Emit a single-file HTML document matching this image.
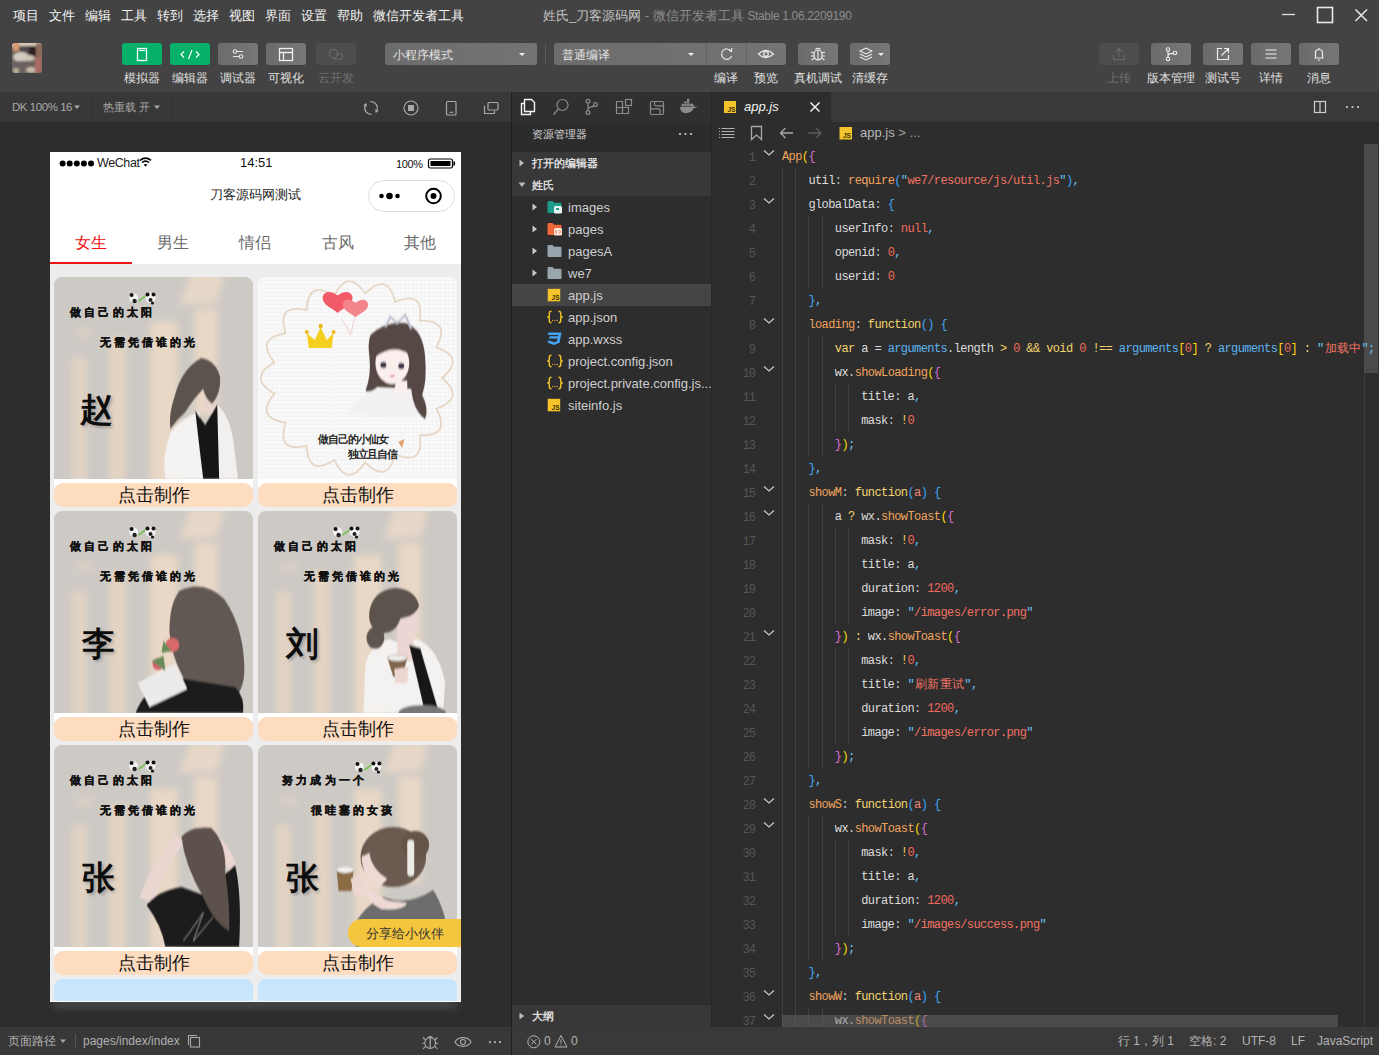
<!DOCTYPE html>
<html><head><meta charset="utf-8">
<style>
*{box-sizing:border-box;margin:0;padding:0}
html,body{width:1379px;height:1055px;overflow:hidden;background:#2d2d2d;font-family:"Liberation Sans",sans-serif;color:#ccc}
.a{position:absolute}
#top{left:0;top:0;width:1379px;height:92px;background:#434343}
.menu{top:8px;font-size:13px;color:#f4f4f4;line-height:16px;white-space:nowrap}
.tbtn{top:43px;width:40px;height:22px;border-radius:3px;background:linear-gradient(90deg,#6b6b6b,#777)}
.tbtn.g{background:#07b16a}
.tbtn.d{background:#4d4d4d}
.tlbl{top:71px;font-size:12px;line-height:14px;color:#e0e0e0;white-space:nowrap;text-align:center;width:60px}
.tlbl.d{color:#717171}
svg{display:block}
#simtb{left:0;top:92px;width:511px;height:30px;background:#383838}
#sim{left:0;top:122px;width:511px;height:905px;background:#2d2d2d;overflow:hidden}
#simbot{left:0;top:1027px;width:511px;height:28px;background:#383838}
#div{left:511px;top:92px;width:1px;height:963px;background:#1f1f1f}
#exp{left:512px;top:92px;width:199px;height:935px;background:#2d2d2d;overflow:hidden}
#ed{left:712px;top:92px;width:667px;height:935px;background:#2d2d2d;overflow:hidden}
#status{left:512px;top:1027px;width:867px;height:28px;background:#393939}
.stx{font-size:12px;color:#a8a8a8;line-height:14px;white-space:nowrap}
#phone{left:50px;top:152px;width:411px;height:850px;background:#fff;overflow:hidden}
.tab{top:234px;width:82px;text-align:center;font-size:16px;line-height:18px;color:#666}
.card{width:199px;height:202px;border-radius:8px 8px 0 0;overflow:hidden}
.mk{width:199px;height:24px;border-radius:9px;background:#fedcbf;color:#111;font-size:18px;line-height:25px;text-align:center}
.tree{font-size:13px;color:#cfcfcf;line-height:22px;white-space:nowrap;height:22px}
.code{font-family:"Liberation Mono",monospace;font-size:12px;letter-spacing:-0.6px;line-height:24px;white-space:pre;color:#d8d8d8}
.ln{font-family:"Liberation Mono",monospace;font-size:12px;letter-spacing:-0.9px;line-height:24px;color:#555;text-align:right;width:40px}
.p{color:#dcdcdc}.o{color:#f0a35c}.s{color:#ef7363}.n{color:#ef6b5b}.k{color:#f2d46c}.b{color:#5cb4f0}.q{color:#6cc4f2}
.br1{color:#ffd700}.br2{color:#da70d6}.br3{color:#3ea8f5}.c{color:#b9c4cc}.pm{color:#f08a7a}
</style></head><body>
<div id="top" class="a">
<div class="a menu" style="left:13px">项目</div>
<div class="a menu" style="left:49px">文件</div>
<div class="a menu" style="left:85px">编辑</div>
<div class="a menu" style="left:121px">工具</div>
<div class="a menu" style="left:157px">转到</div>
<div class="a menu" style="left:193px">选择</div>
<div class="a menu" style="left:229px">视图</div>
<div class="a menu" style="left:265px">界面</div>
<div class="a menu" style="left:301px">设置</div>
<div class="a menu" style="left:337px">帮助</div>
<div class="a menu" style="left:373px">微信开发者工具</div>
<div class="a menu" style="left:543px;color:#c4c4c4">姓氏_刀客源码网<span style="color:#8c8c8c"> - 微信开发者工具 <span style="font-size:12px;letter-spacing:-0.35px">Stable 1.06.2209190</span></span></div>
<svg class="a" style="left:1276px;top:4px" width="100" height="24"><line x1="6" y1="10.5" x2="19" y2="10.5" stroke="#e0e0e0" stroke-width="1.3"/><rect x="41.5" y="3.5" width="15" height="15" fill="none" stroke="#e8e8e8" stroke-width="1.6"/><path d="M79.5 5.5 L91 17 M91 5.5 L79.5 17" stroke="#e8e8e8" stroke-width="1.5"/></svg>
<svg class="a" style="left:12px;top:43px" width="30" height="30"><defs><clipPath id="avc"><rect width="30" height="30" rx="3"/></clipPath><filter id="avb"><feGaussianBlur stdDeviation="1.3"/></filter></defs><g clip-path="url(#avc)"><rect width="30" height="30" fill="#6d625c"/><g filter="url(#avb)"><rect x="-2" y="-2" width="34" height="6" fill="#d8c8b8"/><rect x="1" y="-2" width="6" height="10" fill="#d89a70"/><rect x="7" y="3" width="10" height="9" fill="#4e4a48"/><rect x="17" y="3" width="7" height="12" fill="#2a1e1c"/><rect x="24" y="0" width="8" height="16" fill="#8a6a5c"/><ellipse cx="9" cy="14" rx="8" ry="5" fill="#d4ccc2"/><ellipse cx="17" cy="15" rx="6" ry="3" fill="#cfc4b8"/><rect x="-2" y="18" width="25" height="14" fill="#6a625e"/><ellipse cx="19" cy="27" rx="5" ry="3" fill="#c8bca8"/><rect x="23" y="15" width="7" height="16" fill="#a86a64"/><ellipse cx="4" cy="28" rx="3" ry="3" fill="#b8ae98"/></g></g></svg>
<div class="a tbtn g" style="left:122px"><svg width="40" height="22"><rect x="15.5" y="5.5" width="9" height="12" fill="none" stroke="#fff" stroke-width="1.3"/><line x1="17" y1="7.5" x2="23" y2="7.5" stroke="#fff" stroke-width="1.2"/></svg></div>
<div class="a tlbl " style="left:112px">模拟器</div>
<div class="a tbtn g" style="left:170px"><svg width="40" height="22"><path d="M14 8.5 L11 11.5 L14 14.5 M26 8.5 L29 11.5 L26 14.5 M22 7 L18.5 16" fill="none" stroke="#fff" stroke-width="1.2"/></svg></div>
<div class="a tlbl " style="left:160px">编辑器</div>
<div class="a tbtn " style="left:218px"><svg width="40" height="22"><path d="M15 8.5 H25 M15 13.5 H25" stroke="#e8e8e8" stroke-width="1.1"/><circle cx="17" cy="8.5" r="1.8" fill="#6f6f6f" stroke="#e8e8e8" stroke-width="1.1"/><circle cx="23" cy="13.5" r="1.8" fill="#6f6f6f" stroke="#e8e8e8" stroke-width="1.1"/></svg></div>
<div class="a tlbl " style="left:208px">调试器</div>
<div class="a tbtn " style="left:266px"><svg width="40" height="22"><rect x="13.5" y="5.5" width="13" height="12" fill="none" stroke="#f0f0f0" stroke-width="1.3"/><path d="M13.5 9.5 H26.5 M17.5 9.5 V17.5" stroke="#f0f0f0" stroke-width="1.3"/></svg></div>
<div class="a tlbl " style="left:256px">可视化</div>
<div class="a tbtn d" style="left:316px"><svg width="40" height="22"><circle cx="17.6" cy="10.6" r="4.2" fill="none" stroke="#6a6a6a" stroke-width="1.1"/><path d="M20.6 13.6 A3 3 0 1 1 22 16 H17.5" fill="none" stroke="#6a6a6a" stroke-width="1.1"/></svg></div>
<div class="a tlbl d" style="left:306px">云开发</div>
<div class="a" style="left:385px;top:43px;width:152px;height:22px;border-radius:3px;background:linear-gradient(90deg,#6c6c6c,#747474);font-size:12px;line-height:25px;color:#e4e4e4;padding-left:8px">小程序模式<div class="a" style="left:134px;top:10px;width:0;height:0;border-left:3px solid transparent;border-right:3px solid transparent;border-top:3px solid #eee"></div></div>
<div class="a" style="left:545px;top:43px;width:1px;height:22px;background:#5a5a5a"></div>
<div class="a" style="left:554px;top:43px;width:232px;height:22px;border-radius:3px;background:linear-gradient(90deg,#6c6c6c,#747474);font-size:12px;line-height:25px;color:#e4e4e4;padding-left:8px">普通编译<div class="a" style="left:134px;top:10px;width:0;height:0;border-left:3px solid transparent;border-right:3px solid transparent;border-top:3px solid #eee"></div><div class="a" style="left:152px;top:0;width:1px;height:22px;background:#636363"></div><div class="a" style="left:192px;top:0;width:1px;height:22px;background:#636363"></div><svg class="a" style="left:152px;top:0" width="80" height="22"><path d="M25 8.2 A5.2 5.2 0 1 0 25.6 13" fill="none" stroke="#e8e8e8" stroke-width="1.2"/><path d="M22.5 6.5 L25.5 8.5 L25.8 5" fill="none" stroke="#e8e8e8" stroke-width="1.2"/><path d="M52.5 11 Q60 4 67.5 11 Q60 18 52.5 11 Z" fill="none" stroke="#e8e8e8" stroke-width="1.2"/><circle cx="60" cy="11" r="2.3" fill="none" stroke="#e8e8e8" stroke-width="1.2"/></svg></div>
<div class="a tbtn" style="left:798px"><svg width="40" height="22"><ellipse cx="20" cy="12" rx="4" ry="5" fill="none" stroke="#eee" stroke-width="1.2"/><path d="M17.5 6.5 Q20 4 22.5 6.5 M20 7.5 V17 M13 9 L16 10 M13 13 H16 M13.5 17 L16.5 15 M27 9 L24 10 M27 13 H24 M26.5 17 L23.5 15" fill="none" stroke="#eee" stroke-width="1.1"/></svg></div>
<div class="a tbtn" style="left:850px"><svg width="40" height="22"><path d="M10 8 L16 5 L22 8 L16 11 Z" fill="none" stroke="#eee" stroke-width="1.1"/><path d="M10 11 L16 14 L22 11 M10 14 L16 17 L22 14" fill="none" stroke="#eee" stroke-width="1.1"/><path d="M28 10 L34 10 L31 13 Z" fill="#eee"/></svg></div>
<div class="a tlbl" style="left:696px">编译</div>
<div class="a tlbl" style="left:736px">预览</div>
<div class="a tlbl" style="left:788px">真机调试</div>
<div class="a tlbl" style="left:840px">清缓存</div>
<div class="a tbtn d" style="left:1099px"><svg width="40" height="22"><path d="M20 14 V6 M16.5 9 L20 5.5 L23.5 9 M14.5 12 V16.5 H25.5 V12" fill="none" stroke="#6a6a6a" stroke-width="1.1"/></svg></div>
<div class="a tlbl d" style="left:1089px">上传</div>
<div class="a tbtn " style="left:1151px"><svg width="40" height="22"><circle cx="17" cy="6.5" r="1.7" fill="none" stroke="#eee" stroke-width="1.1"/><circle cx="17" cy="16" r="1.7" fill="none" stroke="#eee" stroke-width="1.1"/><circle cx="24" cy="10" r="1.7" fill="none" stroke="#eee" stroke-width="1.1"/><path d="M17 8.2 V14.3 M17 13 Q17 10.5 22.4 10.4" fill="none" stroke="#eee" stroke-width="1.1"/></svg></div>
<div class="a tlbl " style="left:1141px">版本管理</div>
<div class="a tbtn " style="left:1203px"><svg width="40" height="22"><path d="M19 5.5 H14.5 V16.5 H25.5 V12 M21 5.5 H25.5 V10 M25 6 L18.5 12.5" fill="none" stroke="#eee" stroke-width="1.2"/></svg></div>
<div class="a tlbl " style="left:1193px">测试号</div>
<div class="a tbtn " style="left:1251px"><svg width="40" height="22"><path d="M14.5 7 H25.5 M14.5 11 H25.5 M14.5 15 H25.5" stroke="#eee" stroke-width="1.2"/></svg></div>
<div class="a tlbl " style="left:1241px">详情</div>
<div class="a tbtn " style="left:1299px"><svg width="40" height="22"><path d="M15.5 15 H24.5 M16.5 15 V10 A3.5 3.5 0 0 1 23.5 10 V15 M19 17 H21 M20 5 V6.5" fill="none" stroke="#eee" stroke-width="1.2"/></svg></div>
<div class="a tlbl " style="left:1289px">消息</div>
</div>

<div id="simtb" class="a"></div><div class="a stx" style="left:12px;top:100px;font-size:11.5px;letter-spacing:-0.45px">DK 100% 16</div><svg class="a" style="left:74px;top:105px" width="7" height="5"><path d="M0 0.5 H6 L3 4 Z" fill="#a8a8a8"/></svg><div class="a" style="left:92px;top:92px;width:1px;height:30px;background:#333"></div><div class="a stx" style="left:103px;top:100px;font-size:11px">热重载 开</div><svg class="a" style="left:154px;top:105px" width="7" height="5"><path d="M0 0.5 H6 L3 4 Z" fill="#a8a8a8"/></svg><div class="a" style="left:171px;top:92px;width:1px;height:30px;background:#333"></div><svg class="a" style="left:355px;top:92px" width="156" height="30"><path d="M15.45 9.72 A6.3 6.3 0 0 1 21.71 18.66" fill="none" stroke="#a8a8a8" stroke-width="1.2"/><path d="M20.61 21.02 L23.73 19.05 L20.11 17.36 Z" fill="#a8a8a8"/><path d="M16.55 22.28 A6.3 6.3 0 0 1 10.29 13.34" fill="none" stroke="#a8a8a8" stroke-width="1.2"/><path d="M11.39 10.98 L8.27 12.95 L11.89 14.64 Z" fill="#a8a8a8"/><circle cx="56" cy="16" r="7" fill="none" stroke="#a8a8a8" stroke-width="1.2"/><rect x="53" y="13" width="6" height="6" fill="#a8a8a8"/><rect x="91.5" y="9.5" width="9.5" height="13.5" rx="1.3" fill="none" stroke="#a8a8a8" stroke-width="1.2"/><path d="M94.5 20.3 H98.3" stroke="#a8a8a8" stroke-width="1.1"/><rect x="133" y="10.5" width="10" height="7.5" rx="1" fill="none" stroke="#a8a8a8" stroke-width="1.2"/><path d="M130 14 H129.5 V21.5 H139.5 V19" fill="none" stroke="#a8a8a8" stroke-width="1.2"/></svg>
<div id="sim" class="a"></div>
<div id="simbot" class="a"></div><div class="a stx" style="left:8px;top:1034px;color:#b0b0b0">页面路径</div><svg class="a" style="left:60px;top:1039px" width="7" height="5"><path d="M0 0.5 H6 L3 4 Z" fill="#a8a8a8"/></svg><div class="a" style="left:75px;top:1034px;width:1px;height:14px;background:#555"></div><div class="a stx" style="left:83px;top:1034px;color:#b0b0b0">pages/index/index</div><svg class="a" style="left:186px;top:1033px" width="16" height="16"><rect x="4.5" y="4.5" width="9" height="9.5" fill="none" stroke="#a8a8a8" stroke-width="1.1"/><path d="M2.5 12 V2.5 H11" fill="none" stroke="#a8a8a8" stroke-width="1.1"/></svg><svg class="a" style="left:418px;top:1031px" width="90" height="22"><circle cx="12.2" cy="12" r="5.4" fill="none" stroke="#a8a8a8" stroke-width="1.1"/><path d="M9.8 6.8 Q12.2 4.2 14.6 6.8" fill="none" stroke="#a8a8a8" stroke-width="1.1"/><path d="M12.2 6.8 V17.2" stroke="#a8a8a8" stroke-width="1.3"/><path d="M5 6.5 L7.6 9 M4.2 12.3 H6.6 M5 17.8 L7.6 15.4 M19.4 6.5 L16.8 9 M20.2 12.3 H17.8 M19.4 17.8 L16.8 15.4" fill="none" stroke="#a8a8a8" stroke-width="1.1"/><path d="M37 11 C40 5.2 50 5.2 53 11 C50 16.8 40 16.8 37 11 Z" fill="none" stroke="#a8a8a8" stroke-width="1.1"/><circle cx="45" cy="11" r="2.5" fill="none" stroke="#a8a8a8" stroke-width="1.1"/><rect x="88.5" y="0" width="0" height="0"/><rect x="71" y="10.1" width="2" height="2" fill="#a8a8a8"/><rect x="76" y="10.1" width="2" height="2" fill="#a8a8a8"/><rect x="81" y="10.1" width="2" height="2" fill="#a8a8a8"/></svg>
<div id="div" class="a"></div><div class="a" style="left:52px;top:994px;width:407px;height:8px;box-shadow:0 6px 8px -2px rgba(125,125,125,0.75)"></div>
<div id="phone" class="a">
<svg class="a" style="left:0;top:0" width="411" height="22"><circle cx="12.6" cy="11.6" r="3" fill="#000"/><circle cx="19.7" cy="11.6" r="3" fill="#000"/><circle cx="26.8" cy="11.6" r="3" fill="#000"/><circle cx="33.9" cy="11.6" r="3" fill="#000"/><circle cx="41.0" cy="11.6" r="3" fill="#000"/><path d="M90 8.3 Q95.5 3.8 101 8.3" fill="none" stroke="#000" stroke-width="1.6"/><path d="M92 10.5 Q95.5 7.6 99 10.5" fill="none" stroke="#000" stroke-width="1.6"/><path d="M93.7 12.6 Q95.5 11.2 97.3 12.6 L95.5 14.8 Z" fill="#000"/><rect x="378.5" y="7" width="24" height="9" rx="1.8" fill="none" stroke="#000" stroke-width="1.2"/><rect x="380.5" y="9" width="20" height="5" fill="#000"/><path d="M404 9.5 Q405.5 11.5 404 13.5 Z" fill="#000" stroke="#000" stroke-width="1"/></svg>
<div class="a" style="left:47px;top:4px;font-size:12.5px;line-height:15px;color:#222;letter-spacing:-0.4px">WeChat</div>
<div class="a" style="left:190px;top:3px;width:31px;text-align:center;font-size:13px;line-height:15px;color:#111">14:51</div>
<div class="a" style="left:346px;top:6px;font-size:11px;line-height:13px;color:#111;letter-spacing:-0.4px">100%</div>
<div class="a" style="left:0;top:35px;width:411px;text-align:center;font-size:13px;line-height:16px;color:#222;padding-right:0">刀客源码网测试</div>
<svg class="a" style="left:317px;top:27px" width="90" height="34"><rect x="1.5" y="1.5" width="86" height="31" rx="15.5" fill="#fff" stroke="#dcdcdc" stroke-width="1"/><circle cx="14.5" cy="17" r="2.3" fill="#000"/><circle cx="22.5" cy="17" r="3.3" fill="#000"/><circle cx="30.5" cy="17" r="2.3" fill="#000"/><circle cx="66.5" cy="17" r="7.3" fill="none" stroke="#000" stroke-width="2"/><circle cx="66.5" cy="17" r="3" fill="#000"/></svg>
<div class="a tab" style="left:0px;top:82px;color:#f01010">女生</div>
<div class="a tab" style="left:82px;top:82px;color:#6a6a6a">男生</div>
<div class="a tab" style="left:164px;top:82px;color:#6a6a6a">情侣</div>
<div class="a tab" style="left:247px;top:82px;color:#6a6a6a">古风</div>
<div class="a tab" style="left:329px;top:82px;color:#6a6a6a">其他</div>
<div class="a" style="left:0;top:110px;width:82px;height:2px;background:#f01515"></div>
<div class="a" style="left:0;top:112px;width:411px;height:738px;background:#ededed"></div>
<svg width="0" height="0" style="position:absolute"><defs><filter id="blur3" x="-20%" y="-20%" width="140%" height="140%"><feGaussianBlur stdDeviation="3.5"/></filter><filter id="blur5" x="-20%" y="-20%" width="140%" height="140%"><feGaussianBlur stdDeviation="5"/></filter><filter id="blur2" x="-20%" y="-20%" width="140%" height="140%"><feGaussianBlur stdDeviation="1.5"/></filter><filter id="blur1" x="-20%" y="-20%" width="140%" height="140%"><feGaussianBlur stdDeviation="0.8"/></filter><pattern id="grid" width="4" height="4" patternUnits="userSpaceOnUse"><rect width="4" height="4" fill="#f9f9f9"/><path d="M4 0 V4 H0" fill="none" stroke="#e4e4e4" stroke-width="0.5"/></pattern></defs></svg>
<div class="a" style="left:4px;top:323px;width:199px;height:12px;background:#fff"></div>
<div class="a card" style="left:4px;top:125px"><svg width="199" height="202" viewBox="0 0 200 202" preserveAspectRatio="none"><rect width="200" height="202" fill="#cdc9c4"/><g filter="url(#blur3)"><path d="M138 -5 L172 -5 L164 26 L126 28 Z" fill="#e6d7c8"/><rect x="18" y="80" width="15" height="130" fill="#e2d3c4"/><rect x="22" y="50" width="18" height="12" fill="#d8cec4"/><rect x="56" y="60" width="16" height="150" fill="#e4d4c3"/><rect x="97" y="44" width="27" height="165" fill="#e9d8c6"/><rect x="141" y="32" width="23" height="106" fill="#e9d8c6"/></g><g transform="translate(75,15)"><circle cx="5" cy="6" r="4.5" fill="#f2f2f2"/><circle cx="3" cy="3" r="2" fill="#111"/><circle cx="6" cy="9" r="2.2" fill="#222"/><path d="M10 9 L17 4" stroke="#7cc35a" stroke-width="2"/><circle cx="22" cy="6" r="5" fill="#f2f2f2"/><circle cx="19" cy="2.5" r="2" fill="#111"/><circle cx="25" cy="2.5" r="2" fill="#111"/><circle cx="22" cy="8" r="2" fill="#222"/><circle cx="24" cy="11" r="1.6" fill="#111"/></g><text x="16" y="39.5" font-family='"Liberation Serif",serif' font-size="11" font-weight="bold" letter-spacing="3.3" fill="#111" stroke="#111" stroke-width="0.35">做自己的太阳</text><text x="46" y="69.5" font-family='"Liberation Serif",serif' font-size="11" font-weight="bold" letter-spacing="3" fill="#111" stroke="#111" stroke-width="0.35">无需凭借谁的光</text><text x="28" y="146" font-family='"Liberation Serif",serif' font-size="33" font-weight="bold" fill="#000" opacity="0.22" filter="url(#blur2)">赵</text><text x="26" y="144" font-family='"Liberation Serif",serif' font-size="33" font-weight="bold" fill="#0c0c0c">赵</text><g filter="url(#blur1)"><path d="M112 202 Q108 180 117 156 Q128 140 146 135 L152 202 Z" fill="#f4f3f1"/><path d="M164 128 Q176 138 180 162 L185 202 L165 202 Z" fill="#f2f0ee"/><path d="M150 118 L161 120 L160 134 L150 136 Z" fill="#e9d3cf"/><path d="M142 134 L152 148 L164 128 L166 202 L150 202 Q146 170 142 134 Z" fill="#141414"/><path d="M148 81 Q163 84 167 100 Q168 116 159 127 Q152 122 150 112 Q140 122 132 135 Q124 142 117 152 Q115 138 121 120 Q128 92 148 81 Z" fill="#5c534d"/></g></svg></div>
<div class="a mk" style="left:4px;top:331px">点击制作</div>
<div class="a" style="left:208px;top:323px;width:199px;height:12px;background:#fff"></div>
<div class="a card" style="left:208px;top:125px"><svg width="199" height="202" viewBox="0 0 200 202" preserveAspectRatio="none"><rect width="200" height="202" fill="url(#grid)"/><path d="M185.0 101.0 Q209.1 121.4 179.3 131.7 Q194.4 159.4 162.8 158.3 Q166.9 189.6 137.9 177.1 Q130.4 207.8 107.8 185.6 Q89.8 211.5 76.7 182.8 Q50.5 200.4 48.8 168.8 Q18.0 175.8 27.7 145.7 Q-3.5 141.1 16.4 116.6 Q-11.0 101.0 16.4 85.4 Q-3.5 60.9 27.7 56.3 Q18.0 26.2 48.8 33.2 Q50.5 1.6 76.7 19.2 Q89.8 -9.5 107.8 16.4 Q130.4 -5.8 137.9 24.9 Q166.9 12.4 162.8 43.7 Q194.4 42.6 179.3 70.3 Q209.1 80.6 185.0 101.0 Z" fill="none" stroke="#e6d6c6" stroke-width="1.8"/><path transform="translate(80,26) scale(1.25)" d="M0 8 C-4 4 -12 2 -12 -4 C-12 -9 -6 -11 0 -6 C6 -11 12 -9 12 -4 C12 2 4 4 0 8 Z" fill="#f25a68"/><path transform="translate(98,32) scale(1.05)" d="M0 8 C-4 4 -12 2 -12 -4 C-12 -9 -6 -11 0 -6 C6 -11 12 -9 12 -4 C12 2 4 4 0 8 Z" fill="#f4848c"/><path d="M84 42 Q90 50 93 58 M97 42 L93 58" stroke="#f0b0b0" stroke-width="0.6" fill="none"/><path d="M51 71 L49 56 L57 63 L63 50 L69 63 L76 56 L74 71 Z" fill="#f5d020"/><circle cx="49" cy="55" r="2" fill="#eeb820"/><circle cx="63" cy="49" r="2.2" fill="#eeb820"/><circle cx="76" cy="55" r="2" fill="#eeb820"/><g filter="url(#blur1)"><path d="M88 138 Q100 118 120 112 L150 112 Q162 118 162 140 Z" fill="#f3f0f2"/><path d="M113 58 Q128 44 148 46 Q166 52 168 80 Q170 104 165 118 Q172 132 168 142 Q156 134 154 112 L120 110 Q114 116 108 114 Q114 98 112 80 Q110 66 113 58 Z" fill="#574a44"/><ellipse cx="135" cy="86" rx="17" ry="21" fill="#fbefee"/><path d="M139 104 L150 104 L150 116 L136 116 Z" fill="#fbefee"/><path d="M116 72 Q132 54 154 70 L153 78 Q136 66 118 80 Z" fill="#574a44"/><ellipse cx="126" cy="88" rx="3" ry="3.3" fill="#3c3848"/><ellipse cx="144" cy="89" rx="3" ry="3.3" fill="#3c3848"/><ellipse cx="135" cy="99" rx="2.3" ry="1.1" fill="#e06a70"/><path d="M128 50 L133 40 L140 46 L148 38 L154 52" fill="none" stroke="#c0c0d0" stroke-width="2.2"/></g><text x="60" y="166" font-family='"Liberation Sans",sans-serif' font-size="10.5" font-weight="bold" fill="#222">做自己的小仙女</text><text x="90" y="181" font-family='"Liberation Sans",sans-serif' font-size="10.5" font-weight="bold" fill="#222">独立且自信</text><path d="M141 165 L147 162 L145 171 Z" fill="#e0a070"/></svg></div>
<div class="a mk" style="left:208px;top:331px">点击制作</div>
<div class="a" style="left:4px;top:557px;width:199px;height:12px;background:#fff"></div>
<div class="a card" style="left:4px;top:359px"><svg width="199" height="202" viewBox="0 0 200 202" preserveAspectRatio="none"><rect width="200" height="202" fill="#cdc9c4"/><g filter="url(#blur3)"><path d="M138 -5 L172 -5 L164 26 L126 28 Z" fill="#e6d7c8"/><rect x="18" y="80" width="15" height="130" fill="#e2d3c4"/><rect x="22" y="50" width="18" height="12" fill="#d8cec4"/><rect x="56" y="60" width="16" height="150" fill="#e4d4c3"/><rect x="97" y="44" width="27" height="165" fill="#e9d8c6"/><rect x="141" y="32" width="23" height="106" fill="#e9d8c6"/></g><g transform="translate(75,15)"><circle cx="5" cy="6" r="4.5" fill="#f2f2f2"/><circle cx="3" cy="3" r="2" fill="#111"/><circle cx="6" cy="9" r="2.2" fill="#222"/><path d="M10 9 L17 4" stroke="#7cc35a" stroke-width="2"/><circle cx="22" cy="6" r="5" fill="#f2f2f2"/><circle cx="19" cy="2.5" r="2" fill="#111"/><circle cx="25" cy="2.5" r="2" fill="#111"/><circle cx="22" cy="8" r="2" fill="#222"/><circle cx="24" cy="11" r="1.6" fill="#111"/></g><text x="16" y="39.5" font-family='"Liberation Serif",serif' font-size="11" font-weight="bold" letter-spacing="3.3" fill="#111" stroke="#111" stroke-width="0.35">做自己的太阳</text><text x="46" y="69.5" font-family='"Liberation Serif",serif' font-size="11" font-weight="bold" letter-spacing="3" fill="#111" stroke="#111" stroke-width="0.35">无需凭借谁的光</text><text x="30" y="146" font-family='"Liberation Serif",serif' font-size="33" font-weight="bold" fill="#000" opacity="0.22" filter="url(#blur2)">李</text><text x="28" y="144" font-family='"Liberation Serif",serif' font-size="33" font-weight="bold" fill="#0c0c0c">李</text><g filter="url(#blur1)"><path d="M126 80 Q150 68 171 88 Q189 114 191 150 Q193 176 182 186 L140 182 Q118 152 116 120 Q116 93 126 80 Z" fill="#625852"/><path d="M82 202 Q92 176 120 166 L182 176 Q192 186 190 202 Z" fill="#1b1b1b"/><path d="M84 172 L122 152 L134 178 L96 196 Z" fill="#ecebea"/><circle cx="119" cy="134" r="7" fill="#d96b6b"/><circle cx="105" cy="153" r="6" fill="#d7606a"/><path d="M98 150 L110 145 L112 160 Z" fill="#6a8a5a"/><path d="M110 130 L118 140 L108 142 Z" fill="#6a8a5a"/></g></svg></div>
<div class="a mk" style="left:4px;top:565px">点击制作</div>
<div class="a" style="left:208px;top:557px;width:199px;height:12px;background:#fff"></div>
<div class="a card" style="left:208px;top:359px"><svg width="199" height="202" viewBox="0 0 200 202" preserveAspectRatio="none"><rect width="200" height="202" fill="#cdc9c4"/><g filter="url(#blur3)"><path d="M138 -5 L172 -5 L164 26 L126 28 Z" fill="#e6d7c8"/><rect x="18" y="80" width="15" height="130" fill="#e2d3c4"/><rect x="22" y="50" width="18" height="12" fill="#d8cec4"/><rect x="56" y="60" width="16" height="150" fill="#e4d4c3"/><rect x="97" y="44" width="27" height="165" fill="#e9d8c6"/><rect x="141" y="32" width="23" height="106" fill="#e9d8c6"/></g><g transform="translate(75,15)"><circle cx="5" cy="6" r="4.5" fill="#f2f2f2"/><circle cx="3" cy="3" r="2" fill="#111"/><circle cx="6" cy="9" r="2.2" fill="#222"/><path d="M10 9 L17 4" stroke="#7cc35a" stroke-width="2"/><circle cx="22" cy="6" r="5" fill="#f2f2f2"/><circle cx="19" cy="2.5" r="2" fill="#111"/><circle cx="25" cy="2.5" r="2" fill="#111"/><circle cx="22" cy="8" r="2" fill="#222"/><circle cx="24" cy="11" r="1.6" fill="#111"/></g><text x="16" y="39.5" font-family='"Liberation Serif",serif' font-size="11" font-weight="bold" letter-spacing="3.3" fill="#111" stroke="#111" stroke-width="0.35">做自己的太阳</text><text x="46" y="69.5" font-family='"Liberation Serif",serif' font-size="11" font-weight="bold" letter-spacing="3" fill="#111" stroke="#111" stroke-width="0.35">无需凭借谁的光</text><text x="30" y="146" font-family='"Liberation Serif",serif' font-size="33" font-weight="bold" fill="#000" opacity="0.22" filter="url(#blur2)">刘</text><text x="28" y="144" font-family='"Liberation Serif",serif' font-size="33" font-weight="bold" fill="#0c0c0c">刘</text><g filter="url(#blur1)"><path d="M106 202 L108 152 Q114 134 132 128 L142 132 L160 128 Q182 138 188 172 L186 202 Z" fill="#f4f2f0"/><path d="M143 96 Q158 94 162 108 Q160 122 156 128 L158 150 L140 150 L140 115 Z" fill="#ebd6d3"/><path d="M112 100 Q116 79 138 77 Q158 78 162 95 Q158 104 150 106 L143 108 Q140 118 132 121 Q122 124 118 120 Q110 112 112 100 Z" fill="#5c534d"/><ellipse cx="118" cy="127" rx="9" ry="11" fill="#5e554f"/><path d="M152 134 L163 137 L182 202 L168 202 Z" fill="#161616"/><path d="M130 147 L150 147 L145 166 L136 166 Z" fill="#7f6548"/><ellipse cx="140" cy="147" rx="10" ry="3.2" fill="#f0efea" stroke="#9a9080" stroke-width="0.6"/><path d="M137 158 L151 156 L150 172 L138 172 Z" fill="#ecd6d0"/><ellipse cx="165" cy="202" rx="24" ry="8" fill="#777"/></g></svg></div>
<div class="a mk" style="left:208px;top:565px">点击制作</div>
<div class="a" style="left:4px;top:791px;width:199px;height:12px;background:#fff"></div>
<div class="a card" style="left:4px;top:593px"><svg width="199" height="202" viewBox="0 0 200 202" preserveAspectRatio="none"><rect width="200" height="202" fill="#cdc9c4"/><g filter="url(#blur3)"><path d="M138 -5 L172 -5 L164 26 L126 28 Z" fill="#e6d7c8"/><rect x="18" y="80" width="15" height="130" fill="#e2d3c4"/><rect x="22" y="50" width="18" height="12" fill="#d8cec4"/><rect x="56" y="60" width="16" height="150" fill="#e4d4c3"/><rect x="97" y="44" width="27" height="165" fill="#e9d8c6"/><rect x="141" y="32" width="23" height="106" fill="#e9d8c6"/></g><g transform="translate(75,15)"><circle cx="5" cy="6" r="4.5" fill="#f2f2f2"/><circle cx="3" cy="3" r="2" fill="#111"/><circle cx="6" cy="9" r="2.2" fill="#222"/><path d="M10 9 L17 4" stroke="#7cc35a" stroke-width="2"/><circle cx="22" cy="6" r="5" fill="#f2f2f2"/><circle cx="19" cy="2.5" r="2" fill="#111"/><circle cx="25" cy="2.5" r="2" fill="#111"/><circle cx="22" cy="8" r="2" fill="#222"/><circle cx="24" cy="11" r="1.6" fill="#111"/></g><text x="16" y="39.5" font-family='"Liberation Serif",serif' font-size="11" font-weight="bold" letter-spacing="3.3" fill="#111" stroke="#111" stroke-width="0.35">做自己的太阳</text><text x="46" y="69.5" font-family='"Liberation Serif",serif' font-size="11" font-weight="bold" letter-spacing="3" fill="#111" stroke="#111" stroke-width="0.35">无需凭借谁的光</text><text x="30" y="146" font-family='"Liberation Serif",serif' font-size="33" font-weight="bold" fill="#000" opacity="0.22" filter="url(#blur2)">张</text><text x="28" y="144" font-family='"Liberation Serif",serif' font-size="33" font-weight="bold" fill="#0c0c0c">张</text><g filter="url(#blur1)"><path d="M86 152 Q96 124 121 90 L131 97 Q109 127 99 158 Z" fill="#ebd5d1"/><path d="M143 80 Q166 82 183 118 L176 126 Q164 100 143 91 Z" fill="#ebd5d1"/><path d="M93 160 Q104 146 128 142 L150 150 Q162 138 182 120 Q189 150 186 202 L112 202 Q108 180 93 160 Z" fill="#1d1d1d"/><path d="M128 92 Q138 80 158 83 Q174 98 172 128 Q177 158 176 186 Q160 176 150 152 Q132 122 128 92 Z" fill="#5b514b"/><path d="M130 196 L150 168 L140 196 L160 172" fill="none" stroke="#9a9a9a" stroke-width="0.8"/></g></svg></div>
<div class="a mk" style="left:4px;top:799px">点击制作</div>
<div class="a" style="left:208px;top:791px;width:199px;height:12px;background:#fff"></div>
<div class="a card" style="left:208px;top:593px"><svg width="199" height="202" viewBox="0 0 200 202" preserveAspectRatio="none"><rect width="200" height="202" fill="#cdc9c4"/><g filter="url(#blur3)"><path d="M138 -5 L172 -5 L164 26 L126 28 Z" fill="#e6d7c8"/><rect x="18" y="80" width="15" height="130" fill="#e2d3c4"/><rect x="22" y="50" width="18" height="12" fill="#d8cec4"/><rect x="56" y="60" width="16" height="150" fill="#e4d4c3"/><rect x="97" y="44" width="27" height="165" fill="#e9d8c6"/><rect x="141" y="32" width="23" height="106" fill="#e9d8c6"/></g><g transform="translate(97,16)"><circle cx="5" cy="6" r="4.5" fill="#f2f2f2"/><circle cx="3" cy="3" r="2" fill="#111"/><circle cx="6" cy="9" r="2.2" fill="#222"/><path d="M10 9 L17 4" stroke="#7cc35a" stroke-width="2"/><circle cx="22" cy="6" r="5" fill="#f2f2f2"/><circle cx="19" cy="2.5" r="2" fill="#111"/><circle cx="25" cy="2.5" r="2" fill="#111"/><circle cx="22" cy="8" r="2" fill="#222"/><circle cx="24" cy="11" r="1.6" fill="#111"/></g><text x="24" y="39.5" font-family='"Liberation Serif",serif' font-size="11" font-weight="bold" letter-spacing="3.3" fill="#111" stroke="#111" stroke-width="0.35">努力成为一个</text><text x="53" y="69.5" font-family='"Liberation Serif",serif' font-size="11" font-weight="bold" letter-spacing="3" fill="#111" stroke="#111" stroke-width="0.35">很哇塞的女孩</text><text x="30" y="146" font-family='"Liberation Serif",serif' font-size="33" font-weight="bold" fill="#000" opacity="0.22" filter="url(#blur2)">张</text><text x="28" y="144" font-family='"Liberation Serif",serif' font-size="33" font-weight="bold" fill="#0c0c0c">张</text><g filter="url(#blur1)"><path d="M98 178 Q108 160 126 152 Q150 162 176 145 Q190 166 192 202 L98 202 Z" fill="#6c6c6c"/><path d="M103 122 Q110 148 132 156 L150 158 Q146 166 124 164 Q102 154 103 122 Z" fill="#eed9d4"/><ellipse cx="136" cy="112" rx="33" ry="30" fill="#6a5a4f"/><circle cx="158" cy="100" r="14" fill="#655549"/><path d="M104 112 Q106 134 120 144 L130 134 Q114 124 112 108 Z" fill="#eed9d4"/><rect x="150" y="95" width="7" height="36" rx="3" fill="#ecebe6"/><path d="M79 125 L96 125 L94 146 L81 146 Z" fill="#8b6c45"/><ellipse cx="87.5" cy="125" rx="8.5" ry="3" fill="#f2f2f0"/><path d="M93 134 L104 128 L110 150 L98 152 Z" fill="#edd6d0"/></g></svg></div>
<div class="a mk" style="left:208px;top:799px">点击制作</div>
<div class="a" style="left:4px;top:827px;width:199px;height:30px;border-radius:8px 8px 0 0;background:linear-gradient(180deg,#c6e4fc,#cbe8fd)"></div>
<div class="a" style="left:208px;top:827px;width:199px;height:30px;border-radius:8px 8px 0 0;background:linear-gradient(180deg,#c6e4fc,#cbe8fd)"></div>
<div class="a" style="left:0;top:849px;width:411px;height:1px;background:#fff"></div>
<div class="a" style="left:298px;top:767px;width:120px;height:28px;border-radius:14px 0 0 14px;background:#f3c63e;color:#333;font-size:13px;line-height:29px;padding-left:18px;white-space:nowrap">分享给小伙伴</div>
</div>
<div id="exp" class="a"></div>
<div class="a" style="left:512px;top:92px;width:199px;height:30px;background:#303030"></div>
<svg class="a" style="left:512px;top:92px" width="199" height="30"><path d="M12.5 11.5 H9.5 V22.5 H18.5 V19.5" fill="none" stroke="#f4f4f4" stroke-width="1.4"/><path d="M12.5 7.5 H19.5 L22.5 10.5 V19.5 H12.5 Z" fill="none" stroke="#f4f4f4" stroke-width="1.4"/><circle cx="50.5" cy="13" r="5.5" fill="none" stroke="#8c8c8c" stroke-width="1.2"/><path d="M46.6 16.9 L41.5 22.5" stroke="#8c8c8c" stroke-width="1.3"/><circle cx="76" cy="9.3" r="1.9" fill="none" stroke="#8c8c8c" stroke-width="1.2"/><circle cx="76" cy="20.5" r="1.9" fill="none" stroke="#8c8c8c" stroke-width="1.2"/><circle cx="83.5" cy="12.5" r="1.9" fill="none" stroke="#8c8c8c" stroke-width="1.2"/><path d="M76 11.2 V18.6 M76 17 Q77 15 82.5 14.2" fill="none" stroke="#8c8c8c" stroke-width="1.2"/><path d="M104.5 15.5 H110.5 V21.5 H104.5 Z M110.5 15.5 H116.5 V21.5 H110.5 Z M104.5 15.5 V9.5 H110.5 V15.5" fill="none" stroke="#8c8c8c" stroke-width="1.2"/><rect x="113.5" y="7.5" width="6" height="6" fill="none" stroke="#8c8c8c" stroke-width="1.2"/><rect x="138.5" y="9.5" width="13" height="13" rx="1.2" fill="none" stroke="#8c8c8c" stroke-width="1.2"/><path d="M142.6 9.5 V12.6 Q142.6 13.8 144 13.8 H151.5 M138.5 16.8 H147 Q148.2 16.8 148.2 18 V22.5" fill="none" stroke="#8c8c8c" stroke-width="1.2"/><path d="M168 15 H181 Q183.5 14.2 185.5 14.5 Q183.5 16.2 181.5 16.6 Q179 21.2 174 21.3 Q168.3 21 168 15 Z" fill="#8c8c8c"/><path d="M179.5 15 L180.6 11 L182.6 14.6 Z" fill="#8c8c8c"/><rect x="169.6" y="11.8" width="2.3" height="2.6" fill="#8c8c8c"/><rect x="172.3" y="11.8" width="2.3" height="2.6" fill="#8c8c8c"/><rect x="175" y="11.8" width="2.3" height="2.6" fill="#8c8c8c"/><rect x="177.7" y="11.8" width="2.3" height="2.6" fill="#8c8c8c"/><rect x="172.3" y="9.3" width="2.3" height="2.2" fill="#8c8c8c"/><rect x="175" y="9.3" width="2.3" height="2.2" fill="#8c8c8c"/><rect x="175" y="6.8" width="2.3" height="2.2" fill="#8c8c8c"/></svg>
<div class="a" style="left:512px;top:122px;width:199px;height:30px;background:#2c2c2c"></div>
<div class="a" style="left:532px;top:127px;font-size:11px;line-height:14px;color:#d4d4d4">资源管理器</div>
<svg class="a" style="left:676px;top:128px" width="20" height="12"><circle cx="4" cy="6" r="1.1" fill="#d0d0d0"/><circle cx="9.5" cy="6" r="1.1" fill="#d0d0d0"/><circle cx="15" cy="6" r="1.1" fill="#d0d0d0"/></svg>
<div class="a" style="left:512px;top:152px;width:199px;height:22px;background:#383838"></div>
<svg class="a" style="left:519px;top:159px" width="6" height="8"><path d="M0.5 0.5 V7.5 L5 4 Z" fill="#bdbdbd"/></svg>
<div class="a" style="left:532px;top:156px;font-size:11px;line-height:14px;color:#dcdcdc;font-weight:bold">打开的编辑器</div>
<div class="a" style="left:512px;top:174px;width:199px;height:22px;background:#383838"></div>
<svg class="a" style="left:518px;top:182px" width="8" height="6"><path d="M0.5 0.5 H7.5 L4 5 Z" fill="#bdbdbd"/></svg>
<div class="a" style="left:532px;top:178px;font-size:11px;line-height:14px;color:#dcdcdc;font-weight:bold">姓氏</div>
<svg class="a" style="left:532px;top:203px" width="6" height="8"><path d="M0.5 0.5 V7.5 L5 4 Z" fill="#c8c8c8"/></svg>
<div class="a" style="left:547px;top:200px"><svg width="16" height="14"><path d="M0.5 2 Q0.5 1 1.5 1 H5.5 L7 2.8 H13.5 Q14.5 2.8 14.5 3.8 V12 Q14.5 13 13.5 13 H1.5 Q0.5 13 0.5 12 Z" fill="#1f9d8c"/><rect x="7" y="6" width="8" height="7.5" rx="1.5" fill="#e9f5f2"/><path d="M9 8 H12 V10 H9 Z" fill="#1f9d8c"/></svg></div>
<div class="a tree" style="left:568px;top:197px">images</div>
<svg class="a" style="left:532px;top:225px" width="6" height="8"><path d="M0.5 0.5 V7.5 L5 4 Z" fill="#c8c8c8"/></svg>
<div class="a" style="left:547px;top:222px"><svg width="16" height="14"><path d="M0.5 2 Q0.5 1 1.5 1 H5.5 L7 2.8 H13.5 Q14.5 2.8 14.5 3.8 V12 Q14.5 13 13.5 13 H1.5 Q0.5 13 0.5 12 Z" fill="#f0673a"/><rect x="7" y="6" width="8" height="7.5" rx="1.5" fill="#fde4da"/><path d="M9.5 8 L8.5 9.7 L9.5 11.4 M12.5 8 L13.5 9.7 L12.5 11.4" fill="none" stroke="#f0673a" stroke-width="0.9"/></svg></div>
<div class="a tree" style="left:568px;top:219px">pages</div>
<svg class="a" style="left:532px;top:247px" width="6" height="8"><path d="M0.5 0.5 V7.5 L5 4 Z" fill="#c8c8c8"/></svg>
<div class="a" style="left:547px;top:244px"><svg width="16" height="14"><path d="M0.5 2 Q0.5 1 1.5 1 H5.5 L7 2.8 H13.5 Q14.5 2.8 14.5 3.8 V12 Q14.5 13 13.5 13 H1.5 Q0.5 13 0.5 12 Z" fill="#9aa6ae"/></svg></div>
<div class="a tree" style="left:568px;top:241px">pagesA</div>
<svg class="a" style="left:532px;top:269px" width="6" height="8"><path d="M0.5 0.5 V7.5 L5 4 Z" fill="#c8c8c8"/></svg>
<div class="a" style="left:547px;top:266px"><svg width="16" height="14"><path d="M0.5 2 Q0.5 1 1.5 1 H5.5 L7 2.8 H13.5 Q14.5 2.8 14.5 3.8 V12 Q14.5 13 13.5 13 H1.5 Q0.5 13 0.5 12 Z" fill="#9aa6ae"/></svg></div>
<div class="a tree" style="left:568px;top:263px">we7</div>
<div class="a" style="left:512px;top:284px;width:199px;height:22px;background:#454545"></div>
<div class="a" style="left:547px;top:288px"><svg width="14" height="14"><rect x="0.7" y="0.8" width="12.5" height="12.5" fill="#f6c42a"/><text x="4.6" y="11.8" font-family='"Liberation Sans",sans-serif' font-size="6.5" font-weight="bold" fill="#3a3000">JS</text></svg></div>
<div class="a tree" style="left:568px;top:285px">app.js</div>
<div class="a" style="left:547px;top:310px"><svg width="17" height="14"><path d="M4.5 1.2 Q2.3 1.2 2.3 3.2 V5.6 Q2.3 7 0.3 7 Q2.3 7 2.3 8.4 V10.8 Q2.3 12.8 4.5 12.8 M11.5 1.2 Q13.7 1.2 13.7 3.2 V5.6 Q13.7 7 15.7 7 Q13.7 7 13.7 8.4 V10.8 Q13.7 12.8 11.5 12.8" fill="none" stroke="#f3c42b" stroke-width="1.4"/><circle cx="5.6" cy="10.6" r="0.75" fill="#c9a23a"/><circle cx="8" cy="10.6" r="0.75" fill="#c9a23a"/><circle cx="10.4" cy="10.6" r="0.75" fill="#c9a23a"/></svg></div>
<div class="a tree" style="left:568px;top:307px">app.json</div>
<div class="a" style="left:547px;top:332px"><svg width="16" height="14"><path d="M1.5 0.5 H14.5 L12.5 10.8 L7 13 L0.8 10.8 L1.4 8.3 L7 10.3 L10 9.3 L10.6 6.6 H2 L2.6 4.2 H11.1 L11.4 2.9 H1 Z" fill="#42a5f5"/></svg></div>
<div class="a tree" style="left:568px;top:329px">app.wxss</div>
<div class="a" style="left:547px;top:354px"><svg width="17" height="14"><path d="M4.5 1.2 Q2.3 1.2 2.3 3.2 V5.6 Q2.3 7 0.3 7 Q2.3 7 2.3 8.4 V10.8 Q2.3 12.8 4.5 12.8 M11.5 1.2 Q13.7 1.2 13.7 3.2 V5.6 Q13.7 7 15.7 7 Q13.7 7 13.7 8.4 V10.8 Q13.7 12.8 11.5 12.8" fill="none" stroke="#f3c42b" stroke-width="1.4"/><circle cx="5.6" cy="10.6" r="0.75" fill="#c9a23a"/><circle cx="8" cy="10.6" r="0.75" fill="#c9a23a"/><circle cx="10.4" cy="10.6" r="0.75" fill="#c9a23a"/></svg></div>
<div class="a tree" style="left:568px;top:351px">project.config.json</div>
<div class="a" style="left:547px;top:376px"><svg width="17" height="14"><path d="M4.5 1.2 Q2.3 1.2 2.3 3.2 V5.6 Q2.3 7 0.3 7 Q2.3 7 2.3 8.4 V10.8 Q2.3 12.8 4.5 12.8 M11.5 1.2 Q13.7 1.2 13.7 3.2 V5.6 Q13.7 7 15.7 7 Q13.7 7 13.7 8.4 V10.8 Q13.7 12.8 11.5 12.8" fill="none" stroke="#f3c42b" stroke-width="1.4"/><circle cx="5.6" cy="10.6" r="0.75" fill="#c9a23a"/><circle cx="8" cy="10.6" r="0.75" fill="#c9a23a"/><circle cx="10.4" cy="10.6" r="0.75" fill="#c9a23a"/></svg></div>
<div class="a tree" style="left:568px;top:373px">project.private.config.js...</div>
<div class="a" style="left:547px;top:398px"><svg width="14" height="14"><rect x="0.7" y="0.8" width="12.5" height="12.5" fill="#f6c42a"/><text x="4.6" y="11.8" font-family='"Liberation Sans",sans-serif' font-size="6.5" font-weight="bold" fill="#3a3000">JS</text></svg></div>
<div class="a tree" style="left:568px;top:395px">siteinfo.js</div>
<div class="a" style="left:512px;top:1005px;width:199px;height:22px;background:#383838"></div>
<svg class="a" style="left:519px;top:1012px" width="6" height="8"><path d="M0.5 0.5 V7.5 L5 4 Z" fill="#bdbdbd"/></svg>
<div class="a" style="left:532px;top:1009px;font-size:11px;line-height:14px;color:#dcdcdc;font-weight:bold">大纲</div>
<div class="a" style="left:711px;top:92px;width:1px;height:935px;background:#272727"></div>
<div id="ed" class="a"></div>
<div class="a" style="left:712px;top:92px;width:667px;height:30px;background:#393939"></div>
<div class="a" style="left:712px;top:92px;width:119px;height:30px;background:#2d2d2d"></div>
<svg class="a" style="left:723px;top:100px" width="14" height="14"><rect x="1" y="1" width="12" height="12" fill="#f3c42b"/><text x="4.5" y="11.6" font-family='"Liberation Sans",sans-serif' font-size="6.5" font-weight="bold" fill="#3a3000">JS</text></svg>
<div class="a" style="left:744px;top:99px;font-size:13px;line-height:16px;color:#f2f2f2;font-style:italic">app.js</div>
<svg class="a" style="left:806px;top:98px" width="18" height="18"><path d="M4.5 4.5 L13.5 13.5 M13.5 4.5 L4.5 13.5" stroke="#f0f0f0" stroke-width="1.5"/></svg>
<svg class="a" style="left:1306px;top:96px" width="60" height="22"><rect x="8.5" y="5.5" width="11" height="11" fill="none" stroke="#d0d0d0" stroke-width="1.2"/><path d="M14 5.5 V16.5" stroke="#d0d0d0" stroke-width="1.2"/><circle cx="41" cy="11" r="1.1" fill="#d0d0d0"/><circle cx="46.5" cy="11" r="1.1" fill="#d0d0d0"/><circle cx="52" cy="11" r="1.1" fill="#d0d0d0"/></svg>
<svg class="a" style="left:712px;top:122px" width="160" height="22"><path d="M9.5 6.5 H22.5 M9.5 9.5 H22.5 M9.5 12.5 H22.5 M9.5 15.5 H22.5" stroke="#b0b0b0" stroke-width="1"/><path d="M7 6.5 H8 M7 9.5 H8 M7 12.5 H8 M7 15.5 H8" stroke="#b0b0b0" stroke-width="1"/><path d="M39.5 4.5 H49.5 V17.5 L44.5 13 L39.5 17.5 Z" fill="none" stroke="#a8a8a8" stroke-width="1.3"/><path d="M68.5 11 H81 M73.5 6 L68.5 11 L73.5 16" fill="none" stroke="#a8a8a8" stroke-width="1.3"/><path d="M96.5 11 H109 M104 6 L109 11 L104 16" fill="none" stroke="#5c5c5c" stroke-width="1.3"/><rect x="127.5" y="5" width="12.5" height="12.5" fill="#f3c42b"/><text x="131" y="16" font-family='"Liberation Sans",sans-serif' font-size="6.5" font-weight="bold" fill="#3a3000">JS</text></svg>
<div class="a" style="left:860px;top:125px;font-size:13px;line-height:16px;color:#b8b8b8;white-space:nowrap">app.js <span style="color:#a0a0a0">&gt; ...</span></div>
<div class="a" style="left:782px;top:168px;width:1px;height:24px;background:#404040"></div>
<div class="a" style="left:795px;top:168px;width:1px;height:24px;background:#404040"></div>
<div class="a" style="left:782px;top:192px;width:1px;height:24px;background:#404040"></div>
<div class="a" style="left:795px;top:192px;width:1px;height:24px;background:#404040"></div>
<div class="a" style="left:782px;top:216px;width:1px;height:24px;background:#404040"></div>
<div class="a" style="left:795px;top:216px;width:1px;height:24px;background:#404040"></div>
<div class="a" style="left:808px;top:216px;width:1px;height:24px;background:#404040"></div>
<div class="a" style="left:822px;top:216px;width:1px;height:24px;background:#404040"></div>
<div class="a" style="left:782px;top:240px;width:1px;height:24px;background:#404040"></div>
<div class="a" style="left:795px;top:240px;width:1px;height:24px;background:#404040"></div>
<div class="a" style="left:808px;top:240px;width:1px;height:24px;background:#404040"></div>
<div class="a" style="left:822px;top:240px;width:1px;height:24px;background:#404040"></div>
<div class="a" style="left:782px;top:264px;width:1px;height:24px;background:#404040"></div>
<div class="a" style="left:795px;top:264px;width:1px;height:24px;background:#404040"></div>
<div class="a" style="left:808px;top:264px;width:1px;height:24px;background:#404040"></div>
<div class="a" style="left:822px;top:264px;width:1px;height:24px;background:#404040"></div>
<div class="a" style="left:782px;top:288px;width:1px;height:24px;background:#404040"></div>
<div class="a" style="left:795px;top:288px;width:1px;height:24px;background:#404040"></div>
<div class="a" style="left:782px;top:312px;width:1px;height:24px;background:#404040"></div>
<div class="a" style="left:795px;top:312px;width:1px;height:24px;background:#404040"></div>
<div class="a" style="left:782px;top:336px;width:1px;height:24px;background:#404040"></div>
<div class="a" style="left:795px;top:336px;width:1px;height:24px;background:#404040"></div>
<div class="a" style="left:808px;top:336px;width:1px;height:24px;background:#404040"></div>
<div class="a" style="left:822px;top:336px;width:1px;height:24px;background:#404040"></div>
<div class="a" style="left:782px;top:360px;width:1px;height:24px;background:#404040"></div>
<div class="a" style="left:795px;top:360px;width:1px;height:24px;background:#404040"></div>
<div class="a" style="left:808px;top:360px;width:1px;height:24px;background:#404040"></div>
<div class="a" style="left:822px;top:360px;width:1px;height:24px;background:#404040"></div>
<div class="a" style="left:782px;top:384px;width:1px;height:24px;background:#404040"></div>
<div class="a" style="left:795px;top:384px;width:1px;height:24px;background:#404040"></div>
<div class="a" style="left:808px;top:384px;width:1px;height:24px;background:#404040"></div>
<div class="a" style="left:822px;top:384px;width:1px;height:24px;background:#404040"></div>
<div class="a" style="left:835px;top:384px;width:1px;height:24px;background:#404040"></div>
<div class="a" style="left:848px;top:384px;width:1px;height:24px;background:#404040"></div>
<div class="a" style="left:782px;top:408px;width:1px;height:24px;background:#404040"></div>
<div class="a" style="left:795px;top:408px;width:1px;height:24px;background:#404040"></div>
<div class="a" style="left:808px;top:408px;width:1px;height:24px;background:#404040"></div>
<div class="a" style="left:822px;top:408px;width:1px;height:24px;background:#404040"></div>
<div class="a" style="left:835px;top:408px;width:1px;height:24px;background:#404040"></div>
<div class="a" style="left:848px;top:408px;width:1px;height:24px;background:#404040"></div>
<div class="a" style="left:782px;top:432px;width:1px;height:24px;background:#404040"></div>
<div class="a" style="left:795px;top:432px;width:1px;height:24px;background:#404040"></div>
<div class="a" style="left:808px;top:432px;width:1px;height:24px;background:#404040"></div>
<div class="a" style="left:822px;top:432px;width:1px;height:24px;background:#404040"></div>
<div class="a" style="left:782px;top:456px;width:1px;height:24px;background:#404040"></div>
<div class="a" style="left:795px;top:456px;width:1px;height:24px;background:#404040"></div>
<div class="a" style="left:782px;top:480px;width:1px;height:24px;background:#404040"></div>
<div class="a" style="left:795px;top:480px;width:1px;height:24px;background:#404040"></div>
<div class="a" style="left:782px;top:504px;width:1px;height:24px;background:#404040"></div>
<div class="a" style="left:795px;top:504px;width:1px;height:24px;background:#404040"></div>
<div class="a" style="left:808px;top:504px;width:1px;height:24px;background:#404040"></div>
<div class="a" style="left:822px;top:504px;width:1px;height:24px;background:#404040"></div>
<div class="a" style="left:782px;top:528px;width:1px;height:24px;background:#404040"></div>
<div class="a" style="left:795px;top:528px;width:1px;height:24px;background:#404040"></div>
<div class="a" style="left:808px;top:528px;width:1px;height:24px;background:#404040"></div>
<div class="a" style="left:822px;top:528px;width:1px;height:24px;background:#404040"></div>
<div class="a" style="left:835px;top:528px;width:1px;height:24px;background:#404040"></div>
<div class="a" style="left:848px;top:528px;width:1px;height:24px;background:#404040"></div>
<div class="a" style="left:782px;top:552px;width:1px;height:24px;background:#404040"></div>
<div class="a" style="left:795px;top:552px;width:1px;height:24px;background:#404040"></div>
<div class="a" style="left:808px;top:552px;width:1px;height:24px;background:#404040"></div>
<div class="a" style="left:822px;top:552px;width:1px;height:24px;background:#404040"></div>
<div class="a" style="left:835px;top:552px;width:1px;height:24px;background:#404040"></div>
<div class="a" style="left:848px;top:552px;width:1px;height:24px;background:#404040"></div>
<div class="a" style="left:782px;top:576px;width:1px;height:24px;background:#404040"></div>
<div class="a" style="left:795px;top:576px;width:1px;height:24px;background:#404040"></div>
<div class="a" style="left:808px;top:576px;width:1px;height:24px;background:#404040"></div>
<div class="a" style="left:822px;top:576px;width:1px;height:24px;background:#404040"></div>
<div class="a" style="left:835px;top:576px;width:1px;height:24px;background:#404040"></div>
<div class="a" style="left:848px;top:576px;width:1px;height:24px;background:#404040"></div>
<div class="a" style="left:782px;top:600px;width:1px;height:24px;background:#404040"></div>
<div class="a" style="left:795px;top:600px;width:1px;height:24px;background:#404040"></div>
<div class="a" style="left:808px;top:600px;width:1px;height:24px;background:#404040"></div>
<div class="a" style="left:822px;top:600px;width:1px;height:24px;background:#404040"></div>
<div class="a" style="left:835px;top:600px;width:1px;height:24px;background:#404040"></div>
<div class="a" style="left:848px;top:600px;width:1px;height:24px;background:#404040"></div>
<div class="a" style="left:782px;top:624px;width:1px;height:24px;background:#404040"></div>
<div class="a" style="left:795px;top:624px;width:1px;height:24px;background:#404040"></div>
<div class="a" style="left:808px;top:624px;width:1px;height:24px;background:#404040"></div>
<div class="a" style="left:822px;top:624px;width:1px;height:24px;background:#404040"></div>
<div class="a" style="left:782px;top:648px;width:1px;height:24px;background:#404040"></div>
<div class="a" style="left:795px;top:648px;width:1px;height:24px;background:#404040"></div>
<div class="a" style="left:808px;top:648px;width:1px;height:24px;background:#404040"></div>
<div class="a" style="left:822px;top:648px;width:1px;height:24px;background:#404040"></div>
<div class="a" style="left:835px;top:648px;width:1px;height:24px;background:#404040"></div>
<div class="a" style="left:848px;top:648px;width:1px;height:24px;background:#404040"></div>
<div class="a" style="left:782px;top:672px;width:1px;height:24px;background:#404040"></div>
<div class="a" style="left:795px;top:672px;width:1px;height:24px;background:#404040"></div>
<div class="a" style="left:808px;top:672px;width:1px;height:24px;background:#404040"></div>
<div class="a" style="left:822px;top:672px;width:1px;height:24px;background:#404040"></div>
<div class="a" style="left:835px;top:672px;width:1px;height:24px;background:#404040"></div>
<div class="a" style="left:848px;top:672px;width:1px;height:24px;background:#404040"></div>
<div class="a" style="left:782px;top:696px;width:1px;height:24px;background:#404040"></div>
<div class="a" style="left:795px;top:696px;width:1px;height:24px;background:#404040"></div>
<div class="a" style="left:808px;top:696px;width:1px;height:24px;background:#404040"></div>
<div class="a" style="left:822px;top:696px;width:1px;height:24px;background:#404040"></div>
<div class="a" style="left:835px;top:696px;width:1px;height:24px;background:#404040"></div>
<div class="a" style="left:848px;top:696px;width:1px;height:24px;background:#404040"></div>
<div class="a" style="left:782px;top:720px;width:1px;height:24px;background:#404040"></div>
<div class="a" style="left:795px;top:720px;width:1px;height:24px;background:#404040"></div>
<div class="a" style="left:808px;top:720px;width:1px;height:24px;background:#404040"></div>
<div class="a" style="left:822px;top:720px;width:1px;height:24px;background:#404040"></div>
<div class="a" style="left:835px;top:720px;width:1px;height:24px;background:#404040"></div>
<div class="a" style="left:848px;top:720px;width:1px;height:24px;background:#404040"></div>
<div class="a" style="left:782px;top:744px;width:1px;height:24px;background:#404040"></div>
<div class="a" style="left:795px;top:744px;width:1px;height:24px;background:#404040"></div>
<div class="a" style="left:808px;top:744px;width:1px;height:24px;background:#404040"></div>
<div class="a" style="left:822px;top:744px;width:1px;height:24px;background:#404040"></div>
<div class="a" style="left:782px;top:768px;width:1px;height:24px;background:#404040"></div>
<div class="a" style="left:795px;top:768px;width:1px;height:24px;background:#404040"></div>
<div class="a" style="left:782px;top:792px;width:1px;height:24px;background:#404040"></div>
<div class="a" style="left:795px;top:792px;width:1px;height:24px;background:#404040"></div>
<div class="a" style="left:782px;top:816px;width:1px;height:24px;background:#404040"></div>
<div class="a" style="left:795px;top:816px;width:1px;height:24px;background:#404040"></div>
<div class="a" style="left:808px;top:816px;width:1px;height:24px;background:#404040"></div>
<div class="a" style="left:822px;top:816px;width:1px;height:24px;background:#404040"></div>
<div class="a" style="left:782px;top:840px;width:1px;height:24px;background:#404040"></div>
<div class="a" style="left:795px;top:840px;width:1px;height:24px;background:#404040"></div>
<div class="a" style="left:808px;top:840px;width:1px;height:24px;background:#404040"></div>
<div class="a" style="left:822px;top:840px;width:1px;height:24px;background:#404040"></div>
<div class="a" style="left:835px;top:840px;width:1px;height:24px;background:#404040"></div>
<div class="a" style="left:848px;top:840px;width:1px;height:24px;background:#404040"></div>
<div class="a" style="left:782px;top:864px;width:1px;height:24px;background:#404040"></div>
<div class="a" style="left:795px;top:864px;width:1px;height:24px;background:#404040"></div>
<div class="a" style="left:808px;top:864px;width:1px;height:24px;background:#404040"></div>
<div class="a" style="left:822px;top:864px;width:1px;height:24px;background:#404040"></div>
<div class="a" style="left:835px;top:864px;width:1px;height:24px;background:#404040"></div>
<div class="a" style="left:848px;top:864px;width:1px;height:24px;background:#404040"></div>
<div class="a" style="left:782px;top:888px;width:1px;height:24px;background:#404040"></div>
<div class="a" style="left:795px;top:888px;width:1px;height:24px;background:#404040"></div>
<div class="a" style="left:808px;top:888px;width:1px;height:24px;background:#404040"></div>
<div class="a" style="left:822px;top:888px;width:1px;height:24px;background:#404040"></div>
<div class="a" style="left:835px;top:888px;width:1px;height:24px;background:#404040"></div>
<div class="a" style="left:848px;top:888px;width:1px;height:24px;background:#404040"></div>
<div class="a" style="left:782px;top:912px;width:1px;height:24px;background:#404040"></div>
<div class="a" style="left:795px;top:912px;width:1px;height:24px;background:#404040"></div>
<div class="a" style="left:808px;top:912px;width:1px;height:24px;background:#404040"></div>
<div class="a" style="left:822px;top:912px;width:1px;height:24px;background:#404040"></div>
<div class="a" style="left:835px;top:912px;width:1px;height:24px;background:#404040"></div>
<div class="a" style="left:848px;top:912px;width:1px;height:24px;background:#404040"></div>
<div class="a" style="left:782px;top:936px;width:1px;height:24px;background:#404040"></div>
<div class="a" style="left:795px;top:936px;width:1px;height:24px;background:#404040"></div>
<div class="a" style="left:808px;top:936px;width:1px;height:24px;background:#404040"></div>
<div class="a" style="left:822px;top:936px;width:1px;height:24px;background:#404040"></div>
<div class="a" style="left:782px;top:960px;width:1px;height:24px;background:#404040"></div>
<div class="a" style="left:795px;top:960px;width:1px;height:24px;background:#404040"></div>
<div class="a" style="left:782px;top:984px;width:1px;height:24px;background:#404040"></div>
<div class="a" style="left:795px;top:984px;width:1px;height:24px;background:#404040"></div>
<div class="a" style="left:782px;top:1008px;width:1px;height:24px;background:#404040"></div>
<div class="a" style="left:795px;top:1008px;width:1px;height:24px;background:#404040"></div>
<div class="a" style="left:808px;top:1008px;width:1px;height:24px;background:#404040"></div>
<div class="a" style="left:822px;top:1008px;width:1px;height:24px;background:#404040"></div>
<div class="a ln" style="left:715px;top:146px">1</div>
<svg class="a" style="left:762px;top:148px" width="14" height="10"><path d="M2 2.5 L7 7 L12 2.5" fill="none" stroke="#c8c8c8" stroke-width="1.2"/></svg>
<div class="a ln" style="left:715px;top:170px">2</div>
<div class="a ln" style="left:715px;top:194px">3</div>
<svg class="a" style="left:762px;top:196px" width="14" height="10"><path d="M2 2.5 L7 7 L12 2.5" fill="none" stroke="#c8c8c8" stroke-width="1.2"/></svg>
<div class="a ln" style="left:715px;top:218px">4</div>
<div class="a ln" style="left:715px;top:242px">5</div>
<div class="a ln" style="left:715px;top:266px">6</div>
<div class="a ln" style="left:715px;top:290px">7</div>
<div class="a ln" style="left:715px;top:314px">8</div>
<svg class="a" style="left:762px;top:316px" width="14" height="10"><path d="M2 2.5 L7 7 L12 2.5" fill="none" stroke="#c8c8c8" stroke-width="1.2"/></svg>
<div class="a ln" style="left:715px;top:338px">9</div>
<div class="a ln" style="left:715px;top:362px">10</div>
<svg class="a" style="left:762px;top:364px" width="14" height="10"><path d="M2 2.5 L7 7 L12 2.5" fill="none" stroke="#c8c8c8" stroke-width="1.2"/></svg>
<div class="a ln" style="left:715px;top:386px">11</div>
<div class="a ln" style="left:715px;top:410px">12</div>
<div class="a ln" style="left:715px;top:434px">13</div>
<div class="a ln" style="left:715px;top:458px">14</div>
<div class="a ln" style="left:715px;top:482px">15</div>
<svg class="a" style="left:762px;top:484px" width="14" height="10"><path d="M2 2.5 L7 7 L12 2.5" fill="none" stroke="#c8c8c8" stroke-width="1.2"/></svg>
<div class="a ln" style="left:715px;top:506px">16</div>
<svg class="a" style="left:762px;top:508px" width="14" height="10"><path d="M2 2.5 L7 7 L12 2.5" fill="none" stroke="#c8c8c8" stroke-width="1.2"/></svg>
<div class="a ln" style="left:715px;top:530px">17</div>
<div class="a ln" style="left:715px;top:554px">18</div>
<div class="a ln" style="left:715px;top:578px">19</div>
<div class="a ln" style="left:715px;top:602px">20</div>
<div class="a ln" style="left:715px;top:626px">21</div>
<svg class="a" style="left:762px;top:628px" width="14" height="10"><path d="M2 2.5 L7 7 L12 2.5" fill="none" stroke="#c8c8c8" stroke-width="1.2"/></svg>
<div class="a ln" style="left:715px;top:650px">22</div>
<div class="a ln" style="left:715px;top:674px">23</div>
<div class="a ln" style="left:715px;top:698px">24</div>
<div class="a ln" style="left:715px;top:722px">25</div>
<div class="a ln" style="left:715px;top:746px">26</div>
<div class="a ln" style="left:715px;top:770px">27</div>
<div class="a ln" style="left:715px;top:794px">28</div>
<svg class="a" style="left:762px;top:796px" width="14" height="10"><path d="M2 2.5 L7 7 L12 2.5" fill="none" stroke="#c8c8c8" stroke-width="1.2"/></svg>
<div class="a ln" style="left:715px;top:818px">29</div>
<svg class="a" style="left:762px;top:820px" width="14" height="10"><path d="M2 2.5 L7 7 L12 2.5" fill="none" stroke="#c8c8c8" stroke-width="1.2"/></svg>
<div class="a ln" style="left:715px;top:842px">30</div>
<div class="a ln" style="left:715px;top:866px">31</div>
<div class="a ln" style="left:715px;top:890px">32</div>
<div class="a ln" style="left:715px;top:914px">33</div>
<div class="a ln" style="left:715px;top:938px">34</div>
<div class="a ln" style="left:715px;top:962px">35</div>
<div class="a ln" style="left:715px;top:986px">36</div>
<svg class="a" style="left:762px;top:988px" width="14" height="10"><path d="M2 2.5 L7 7 L12 2.5" fill="none" stroke="#c8c8c8" stroke-width="1.2"/></svg>
<div class="a ln" style="left:715px;top:1010px">37</div>
<svg class="a" style="left:762px;top:1012px" width="14" height="10"><path d="M2 2.5 L7 7 L12 2.5" fill="none" stroke="#c8c8c8" stroke-width="1.2"/></svg>
<div class="a" style="left:1364px;top:144px;width:14px;height:229px;background:#4a4a4a"></div>
<div class="a code" style="left:782px;top:145px;width:597px;height:882px;overflow:hidden"><span style="color:#f0a35c">App</span><span style="color:#ffd700">(</span><span style="color:#da70d6">{</span>
    <span style="color:#dcdcdc">util</span><span style="color:#b9c4cc">:</span> <span style="color:#f0a35c">require</span><span style="color:#3ea8f5">(</span><span style="color:#6cc4f2">"</span><span style="color:#ef7363">we7/resource/js/util.js</span><span style="color:#6cc4f2">"</span><span style="color:#3ea8f5">)</span><span style="color:#6cc4f2">,</span>
    <span style="color:#dcdcdc">globalData</span><span style="color:#b9c4cc">:</span> <span style="color:#3ea8f5">{</span>
        <span style="color:#dcdcdc">userInfo</span><span style="color:#b9c4cc">:</span> <span style="color:#ef6b5b">null</span><span style="color:#6cc4f2">,</span>
        <span style="color:#dcdcdc">openid</span><span style="color:#b9c4cc">:</span> <span style="color:#ef6b5b">0</span><span style="color:#6cc4f2">,</span>
        <span style="color:#dcdcdc">userid</span><span style="color:#b9c4cc">:</span> <span style="color:#ef6b5b">0</span>
    <span style="color:#3ea8f5">}</span><span style="color:#6cc4f2">,</span>
    <span style="color:#f0a35c">loading</span><span style="color:#b9c4cc">:</span> <span style="color:#f2d46c">function</span><span style="color:#3ea8f5">(</span><span style="color:#3ea8f5">)</span> <span style="color:#3ea8f5">{</span>
        <span style="color:#f2d46c">var</span> <span style="color:#dcdcdc">a</span> <span style="color:#dcdcdc">=</span> <span style="color:#5cb4f0">arguments</span><span style="color:#dcdcdc">.</span><span style="color:#dcdcdc">length</span> <span style="color:#f2d46c">&gt;</span> <span style="color:#ef6b5b">0</span> <span style="color:#f2d46c">&amp;&amp;</span> <span style="color:#f2d46c">void</span> <span style="color:#ef6b5b">0</span> <span style="color:#f2d46c">!==</span> <span style="color:#5cb4f0">arguments</span><span style="color:#ffd700">[</span><span style="color:#ef6b5b">0</span><span style="color:#ffd700">]</span> <span style="color:#f2d46c">?</span> <span style="color:#5cb4f0">arguments</span><span style="color:#ffd700">[</span><span style="color:#ef6b5b">0</span><span style="color:#ffd700">]</span> <span style="color:#f2d46c">:</span> <span style="color:#6cc4f2">"</span><span style="color:#ef7363"><span style="letter-spacing:0.3px;margin-left:1px">加载中</span></span><span style="color:#6cc4f2">"</span><span style="color:#6cc4f2">;</span>
        <span style="color:#dcdcdc">wx</span><span style="color:#dcdcdc">.</span><span style="color:#f0a35c">showLoading</span><span style="color:#ffd700">(</span><span style="color:#da70d6">{</span>
            <span style="color:#dcdcdc">title</span><span style="color:#b9c4cc">:</span> <span style="color:#dcdcdc">a</span><span style="color:#6cc4f2">,</span>
            <span style="color:#dcdcdc">mask</span><span style="color:#b9c4cc">:</span> <span style="color:#f2d46c">!</span><span style="color:#ef6b5b">0</span>
        <span style="color:#da70d6">}</span><span style="color:#ffd700">)</span><span style="color:#6cc4f2">;</span>
    <span style="color:#3ea8f5">}</span><span style="color:#6cc4f2">,</span>
    <span style="color:#f0a35c">showM</span><span style="color:#b9c4cc">:</span> <span style="color:#f2d46c">function</span><span style="color:#3ea8f5">(</span><span style="color:#f08a7a">a</span><span style="color:#3ea8f5">)</span> <span style="color:#3ea8f5">{</span>
        <span style="color:#dcdcdc">a</span> <span style="color:#f2d46c">?</span> <span style="color:#dcdcdc">wx</span><span style="color:#dcdcdc">.</span><span style="color:#f0a35c">showToast</span><span style="color:#ffd700">(</span><span style="color:#da70d6">{</span>
            <span style="color:#dcdcdc">mask</span><span style="color:#b9c4cc">:</span> <span style="color:#f2d46c">!</span><span style="color:#ef6b5b">0</span><span style="color:#6cc4f2">,</span>
            <span style="color:#dcdcdc">title</span><span style="color:#b9c4cc">:</span> <span style="color:#dcdcdc">a</span><span style="color:#6cc4f2">,</span>
            <span style="color:#dcdcdc">duration</span><span style="color:#b9c4cc">:</span> <span style="color:#ef6b5b">1200</span><span style="color:#6cc4f2">,</span>
            <span style="color:#dcdcdc">image</span><span style="color:#b9c4cc">:</span> <span style="color:#6cc4f2">"</span><span style="color:#ef7363">/images/error.png</span><span style="color:#6cc4f2">"</span>
        <span style="color:#da70d6">}</span><span style="color:#ffd700">)</span> <span style="color:#f2d46c">:</span> <span style="color:#dcdcdc">wx</span><span style="color:#dcdcdc">.</span><span style="color:#f0a35c">showToast</span><span style="color:#ffd700">(</span><span style="color:#da70d6">{</span>
            <span style="color:#dcdcdc">mask</span><span style="color:#b9c4cc">:</span> <span style="color:#f2d46c">!</span><span style="color:#ef6b5b">0</span><span style="color:#6cc4f2">,</span>
            <span style="color:#dcdcdc">title</span><span style="color:#b9c4cc">:</span> <span style="color:#6cc4f2">"</span><span style="color:#ef7363"><span style="letter-spacing:0.3px;margin-left:1px">刷新重试</span></span><span style="color:#6cc4f2">"</span><span style="color:#6cc4f2">,</span>
            <span style="color:#dcdcdc">duration</span><span style="color:#b9c4cc">:</span> <span style="color:#ef6b5b">1200</span><span style="color:#6cc4f2">,</span>
            <span style="color:#dcdcdc">image</span><span style="color:#b9c4cc">:</span> <span style="color:#6cc4f2">"</span><span style="color:#ef7363">/images/error.png</span><span style="color:#6cc4f2">"</span>
        <span style="color:#da70d6">}</span><span style="color:#ffd700">)</span><span style="color:#6cc4f2">;</span>
    <span style="color:#3ea8f5">}</span><span style="color:#6cc4f2">,</span>
    <span style="color:#f0a35c">showS</span><span style="color:#b9c4cc">:</span> <span style="color:#f2d46c">function</span><span style="color:#3ea8f5">(</span><span style="color:#f08a7a">a</span><span style="color:#3ea8f5">)</span> <span style="color:#3ea8f5">{</span>
        <span style="color:#dcdcdc">wx</span><span style="color:#dcdcdc">.</span><span style="color:#f0a35c">showToast</span><span style="color:#ffd700">(</span><span style="color:#da70d6">{</span>
            <span style="color:#dcdcdc">mask</span><span style="color:#b9c4cc">:</span> <span style="color:#f2d46c">!</span><span style="color:#ef6b5b">0</span><span style="color:#6cc4f2">,</span>
            <span style="color:#dcdcdc">title</span><span style="color:#b9c4cc">:</span> <span style="color:#dcdcdc">a</span><span style="color:#6cc4f2">,</span>
            <span style="color:#dcdcdc">duration</span><span style="color:#b9c4cc">:</span> <span style="color:#ef6b5b">1200</span><span style="color:#6cc4f2">,</span>
            <span style="color:#dcdcdc">image</span><span style="color:#b9c4cc">:</span> <span style="color:#6cc4f2">"</span><span style="color:#ef7363">/images/success.png</span><span style="color:#6cc4f2">"</span>
        <span style="color:#da70d6">}</span><span style="color:#ffd700">)</span><span style="color:#6cc4f2">;</span>
    <span style="color:#3ea8f5">}</span><span style="color:#6cc4f2">,</span>
    <span style="color:#f0a35c">showW</span><span style="color:#b9c4cc">:</span> <span style="color:#f2d46c">function</span><span style="color:#3ea8f5">(</span><span style="color:#f08a7a">a</span><span style="color:#3ea8f5">)</span> <span style="color:#3ea8f5">{</span>
        <span style="color:#dcdcdc">wx</span><span style="color:#dcdcdc">.</span><span style="color:#f0a35c">showToast</span><span style="color:#ffd700">(</span><span style="color:#da70d6">{</span></div>
<div class="a" style="left:1364px;top:373px;width:1px;height:654px;background:#3a3a3a"></div>
<div class="a" style="left:782px;top:1015px;width:556px;height:12px;background:rgba(110,110,110,0.45)"></div>
<div id="status" class="a"></div>
<svg class="a" style="left:524px;top:1031px" width="60" height="20"><circle cx="9.8" cy="10.8" r="6" fill="none" stroke="#b0b0b0" stroke-width="1"/><path d="M7.2 8.2 L12.4 13.4 M12.4 8.2 L7.2 13.4" stroke="#b0b0b0" stroke-width="1"/><path d="M37 4.5 L43 16 H31 Z" fill="none" stroke="#b0b0b0" stroke-width="1"/><path d="M37 8.5 V12.5 M37 13.5 V14.5" stroke="#b0b0b0" stroke-width="1"/></svg>
<div class="a stx" style="left:544px;top:1034px;color:#b4b4b4">0</div>
<div class="a stx" style="left:571px;top:1034px;color:#b4b4b4">0</div>
<div class="a stx" style="left:1118px;top:1034px;color:#b4b4b4">行 1，列 1</div>
<div class="a stx" style="left:1189px;top:1034px;color:#b4b4b4">空格: 2</div>
<div class="a stx" style="left:1242px;top:1034px;color:#b4b4b4">UTF-8</div>
<div class="a stx" style="left:1291px;top:1034px;color:#b4b4b4">LF</div>
<div class="a stx" style="left:1317px;top:1034px;color:#b4b4b4">JavaScript</div>
</body></html>
